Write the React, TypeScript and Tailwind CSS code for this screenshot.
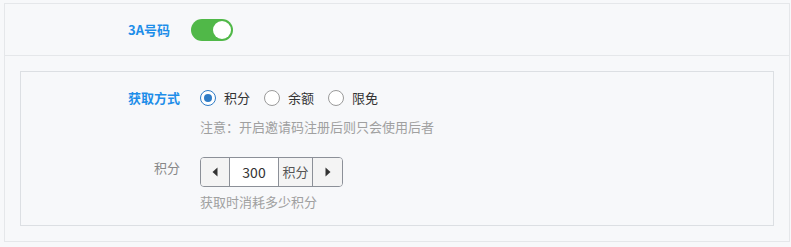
import React from "react";

const font = { fontFamily: '"Noto Sans CJK SC", "Noto Sans", sans-serif' };

const Toggle = () => (
  <div className="flex h-[22px] w-[42px] items-center justify-end rounded-full bg-[#50b848] pr-[2px]">
    <div className="h-[18px] w-[18px] rounded-full bg-white" />
  </div>
);

const Radio = ({ label, checked = false }: { label: string; checked?: boolean }) => (
  <label className="flex items-center gap-[8px]">
    <span
      className={`flex h-[16px] w-[16px] items-center justify-center rounded-full border-[1.5px] bg-white ${
        checked ? "border-[#2f7cc6]" : "border-[#9a9a9a]"
      }`}
    >
      {checked && <span className="h-[8px] w-[8px] rounded-full bg-[#2f7cc6]" />}
    </span>
    <span className="text-[13px] text-[#333]">{label}</span>
  </label>
);

const Caret = ({ dir }: { dir: "left" | "right" }) => (
  <svg width="6" height="10" viewBox="0 0 6 10">
    {dir === "left" ? (
      <path d="M5.5 0.5 L0.5 5 L5.5 9.5 Z" fill="#333" />
    ) : (
      <path d="M0.5 0.5 L5.5 5 L0.5 9.5 Z" fill="#333" />
    )}
  </svg>
);

const App = () => {
  return (
    <div className="h-[247px] w-[791px] overflow-hidden bg-[#f7f8fa] pt-[3px] pl-[4px]" style={font}>
      <div className="w-[786px] border-x border-t border-b border-[#e5e7ea]">
        <div className="flex h-[52px] items-center border-b border-[#e5e7ea]">
          <div className="w-[165px] text-right text-[13px] font-bold text-[#1e8ee9]">3A号码</div>
          <div className="ml-[21px]">
            <Toggle />
          </div>
        </div>
        <div className="px-[15px] pt-[15px] pb-[15px]">
          <div className="border border-[#dcdfe3] pt-[16px] pb-[13px]">
            <div className="flex h-[20px] items-center">
              <div className="w-[159px] text-right text-[13px] font-bold text-[#1e8ee9]">获取方式</div>
              <div className="ml-[20px] flex items-center gap-[14px]">
                <Radio label="积分" checked />
                <Radio label="余额" />
                <Radio label="限免" />
              </div>
            </div>
            <div className="mt-[9px] flex h-[20px] items-center">
              <div className="ml-[179px] text-[13px] text-[#a0a0a0]">注意：开启邀请码注册后则只会使用后者</div>
            </div>
            <div className="mt-[20px] flex items-start">
              <div className="w-[159px] pt-px text-right text-[13px] leading-[20px] text-[#888]">积分</div>
              <div className="ml-[20px]">
                <div className="flex h-[30px] w-[143px] overflow-hidden rounded-[4px] border border-[#8c9098]">
                  <div className="flex w-[29px] items-center justify-center border-r border-[#8c9098] bg-[#f4f4f4]">
                    <Caret dir="left" />
                  </div>
                  <div className="flex w-[48px] items-center justify-center bg-white text-[14px] text-[#333]">300</div>
                  <div className="flex w-[35px] items-center justify-center border-x border-[#8c9098] bg-[#f4f4f4] text-[13px] text-[#555]">
                    积分
                  </div>
                  <div className="flex flex-1 items-center justify-center bg-[#f4f4f4]">
                    <Caret dir="right" />
                  </div>
                </div>
                <div className="mt-[5px] text-[13px] leading-[20px] text-[#a0a0a0]">获取时消耗多少积分</div>
              </div>
            </div>
          </div>
        </div>
      </div>
    </div>
  );
};

export default App;
